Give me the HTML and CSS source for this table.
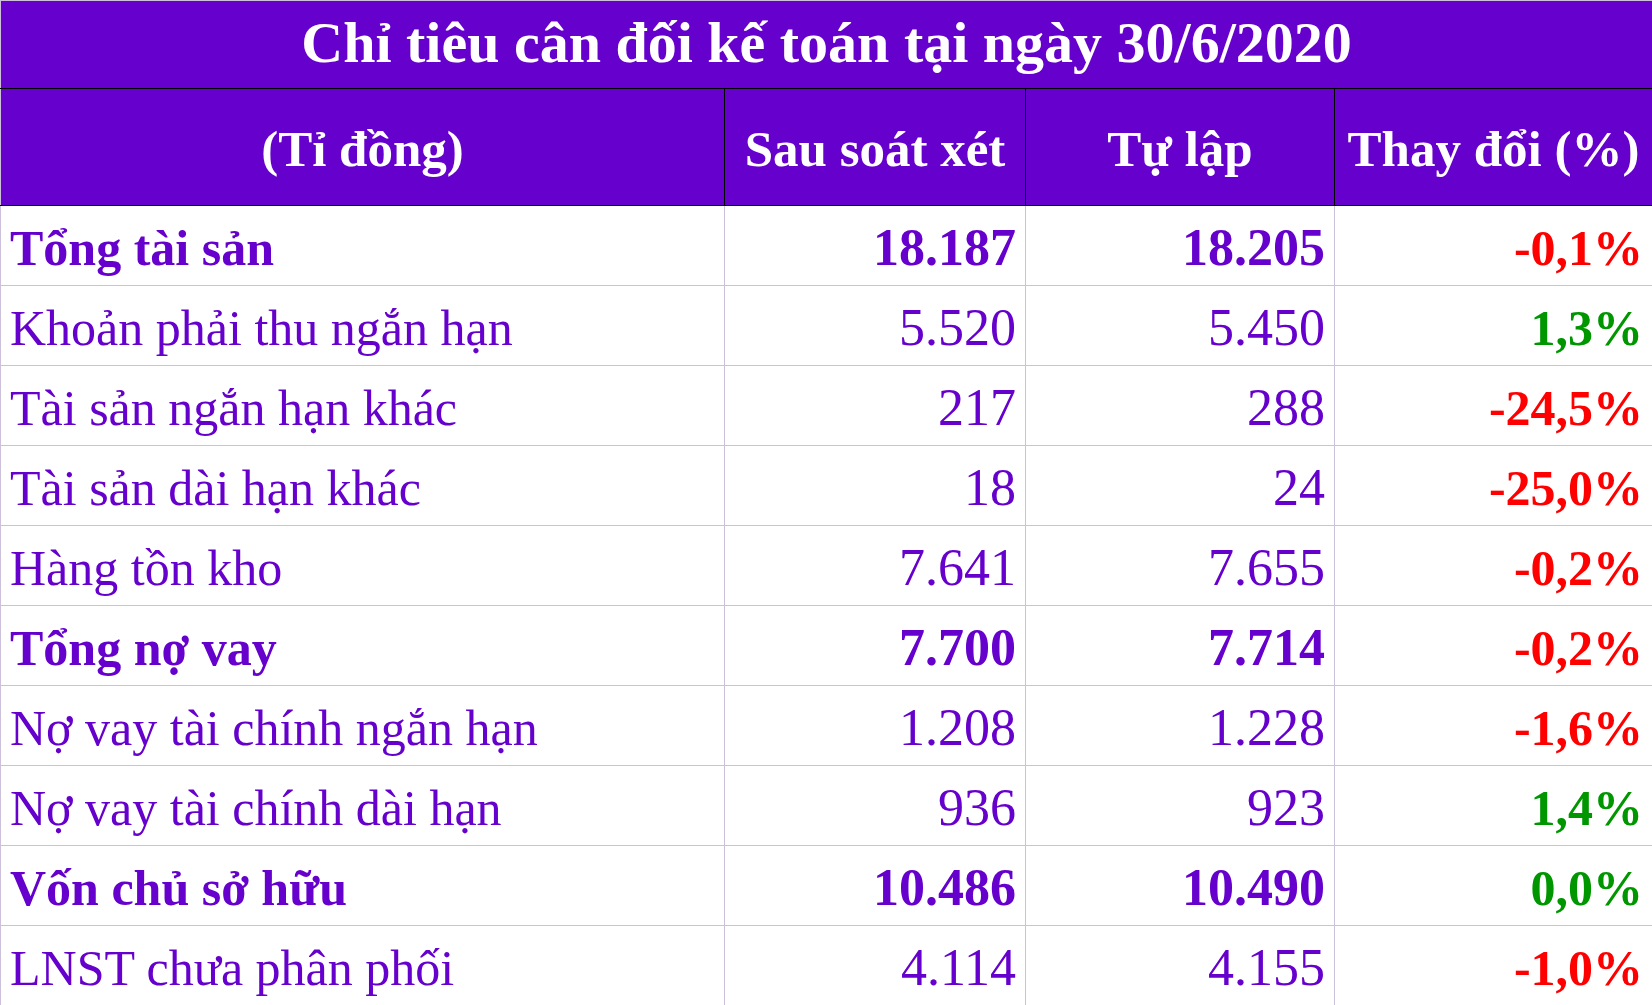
FILE: index.html
```html
<!DOCTYPE html>
<html lang="vi">
<head>
<meta charset="utf-8">
<title>Chỉ tiêu cân đối kế toán</title>
<link rel="stylesheet" href="styles.css">
</head>
<body>
<table class="sheet">
  <colgroup>
    <col class="c-name">
    <col class="c-a">
    <col class="c-b">
    <col class="c-chg">
  </colgroup>
  <thead>
    <tr class="title-row"><th colspan="4" class="title">Chỉ tiêu cân đối kế toán tại ngày 30/6/2020</th></tr>
    <tr class="head-row">
      <th class="h h-first">(Tỉ đồng)</th>
      <th class="h">Sau soát xét</th>
      <th class="h">Tự lập</th>
      <th class="h h-last">Thay đổi (%)</th>
    </tr>
  </thead>
  <tbody>
    <tr class="strong"><td class="name">Tổng tài sản</td><td class="num">18.187</td><td class="num">18.205</td><td class="chg neg">-0,1%</td></tr>
    <tr><td class="name">Khoản phải thu ngắn hạn</td><td class="num">5.520</td><td class="num">5.450</td><td class="chg pos">1,3%</td></tr>
    <tr><td class="name">Tài sản ngắn hạn khác</td><td class="num">217</td><td class="num">288</td><td class="chg neg">-24,5%</td></tr>
    <tr><td class="name">Tài sản dài hạn khác</td><td class="num">18</td><td class="num">24</td><td class="chg neg">-25,0%</td></tr>
    <tr><td class="name">Hàng tồn kho</td><td class="num">7.641</td><td class="num">7.655</td><td class="chg neg">-0,2%</td></tr>
    <tr class="strong"><td class="name">Tổng nợ vay</td><td class="num">7.700</td><td class="num">7.714</td><td class="chg neg">-0,2%</td></tr>
    <tr><td class="name">Nợ vay tài chính ngắn hạn</td><td class="num">1.208</td><td class="num">1.228</td><td class="chg neg">-1,6%</td></tr>
    <tr><td class="name">Nợ vay tài chính dài hạn</td><td class="num">936</td><td class="num">923</td><td class="chg pos">1,4%</td></tr>
    <tr class="strong"><td class="name">Vốn chủ sở hữu</td><td class="num">10.486</td><td class="num">10.490</td><td class="chg pos">0,0%</td></tr>
    <tr><td class="name">LNST chưa phân phối</td><td class="num">4.114</td><td class="num">4.155</td><td class="chg neg">-1,0%</td></tr>
  </tbody>
</table>
</body>
</html>
```
FILE: styles.css
```css
html, body {
  margin: 0;
  padding: 0;
  background: #ffffff;
}

.sheet {
  border-collapse: collapse;
  table-layout: fixed;
  width: 1652px;
  font-family: "Liberation Serif", "Times New Roman", serif;
  color: #6600cc;
}

.c-name { width: 724px; }
.c-a { width: 301px; }
.c-b { width: 309px; }
.c-chg { width: 318px; }

.title {
  height: 84px;
  padding: 0 0 3px;
  background: #6600cc;
  color: #ffffff;
  font-size: 58px;
  line-height: 1;
  font-weight: bold;
  text-align: center;
  vertical-align: middle;
  border: 1px solid #ccc0da;
  border-bottom: 1px solid #000000;
}

.h {
  height: 111px;
  padding: 5px 4px 0;
  background: #6600cc;
  color: #ffffff;
  font-size: 51px;
  line-height: 1;
  font-weight: bold;
  text-align: center;
  vertical-align: middle;
  border: 1px solid #000000;
}

.h-first { border-left-color: #ccc0da; }

td {
  height: 75px;
  padding: 4px 9px 0;
  font-size: 50px;
  line-height: 1;
  vertical-align: middle;
  white-space: nowrap;
  border: 1px solid #ccc0da;
}

.name { text-align: left; }
.num, .chg { text-align: right; }
.num { font-size: 52px; }

.strong td { font-weight: bold; }
.chg { font-weight: bold; }
.neg { color: #ff0000; }
.pos { color: #009600; }
```
